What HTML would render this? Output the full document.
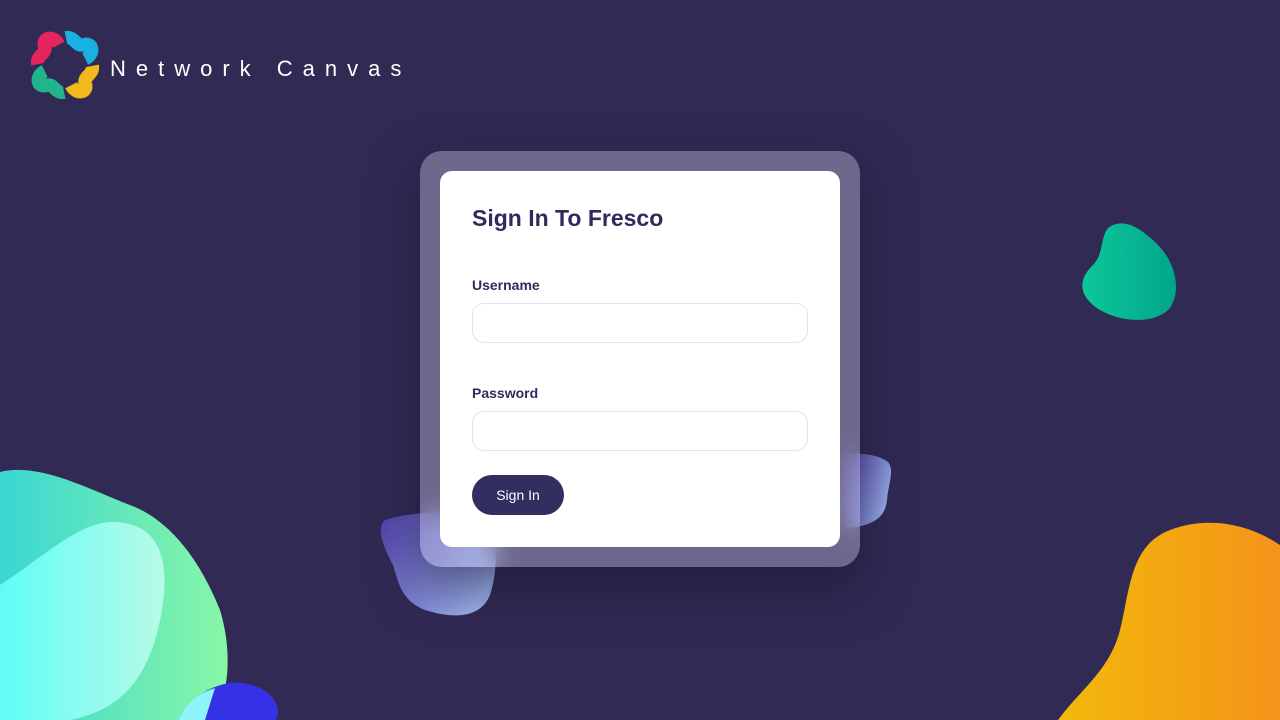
<!DOCTYPE html>
<html><head><meta charset="utf-8"><style>
*{margin:0;padding:0;box-sizing:border-box}
body{width:1280px;height:720px;overflow:hidden;background:#312a54;font-family:"Liberation Sans",sans-serif;position:relative}
svg.bg{position:absolute;left:0;top:0}
.logo{position:absolute;left:28px;top:28px}
.brand{position:absolute;left:110px;top:56px;color:#fff;font-size:22px;letter-spacing:10px;font-weight:400}
.frame{position:absolute;left:420px;top:151px;width:440px;height:416px;border-radius:22px;background:rgba(200,200,225,0.4);backdrop-filter:blur(12px);box-shadow:0 20px 50px rgba(20,15,40,0.5)}
.card{position:absolute;left:20px;top:20px;width:400px;height:376px;border-radius:12px;background:#fff}
h1{position:absolute;left:32px;top:34px;font-size:23px;font-weight:600;color:#312a5c}
label{position:absolute;left:32px;font-size:14px;font-weight:600;color:#312a5c}
.inp{position:absolute;left:32px;width:336px;height:40px;border:1px solid #d9e6ee;border-radius:12px}
.btn{position:absolute;left:32px;top:304px;width:92px;height:40px;border-radius:20px;background:#312e60;color:#fff;font-size:14px;text-align:center;line-height:40px}
</style></head><body>
<svg class="bg" width="1280" height="720">
<defs>
<linearGradient id="g1" x1="0" x2="1"><stop offset="0" stop-color="#3ad6d2"/><stop offset="1" stop-color="#88f7a6"/></linearGradient>
<linearGradient id="g2" x1="0" x2="1"><stop offset="0" stop-color="#5ffcf8"/><stop offset="1" stop-color="#b8fbe6"/></linearGradient>
<linearGradient id="g3" x1="0" x2="1"><stop offset="0" stop-color="#f2b90a"/><stop offset="1" stop-color="#f4941a"/></linearGradient>
<linearGradient id="g4" x1="0" x2="1"><stop offset="0" stop-color="#0cc79b"/><stop offset="1" stop-color="#00a58a"/></linearGradient>
<linearGradient id="g5" x1="0" x2="1" y1="0" y2="0.6"><stop offset="0" stop-color="#4f3fa8"/><stop offset="1" stop-color="#9ab0ea"/></linearGradient>
</defs>
<path d="M0 472 C40 462 90 490 130 505 C170 520 200 560 220 610 C235 660 225 700 215 720 L0 720Z" fill="url(#g1)"/>
<path d="M0 585 C40 560 80 520 115 522 C160 524 170 560 162 610 C150 680 120 710 70 720 L0 720Z" fill="url(#g2)"/>
<path d="M178 720 C190 695 215 685 230 683 C260 680 285 700 276 720Z" fill="#3531e6"/>
<path d="M178 720 C188 700 200 693 215 688 L205 720Z" fill="#8ff4fa"/>
<path d="M1058 720 C1080 690 1110 670 1120 630 C1130 590 1130 545 1170 530 C1210 515 1250 525 1280 545 L1280 720Z" fill="url(#g3)"/>
<path d="M1108 228 C1125 215 1145 232 1158 245 C1175 262 1182 290 1170 308 C1155 325 1120 322 1100 310 C1078 296 1078 280 1092 266 C1104 255 1100 238 1108 228Z" fill="url(#g4)"/>
<path d="M385 520 C410 512 450 510 480 515 C500 530 498 570 490 595 C480 620 450 618 425 610 C400 600 398 580 393 565 C385 550 375 528 385 520Z" fill="url(#g5)"/>
<path d="M845 455 C860 452 880 455 888 462 C895 470 888 485 887 500 C885 520 870 525 850 528 L845 528Z" fill="url(#g5)"/>
</svg>
<svg class="logo" width="74" height="74" viewBox="-5 -5 84 84" fill="none" stroke-width="15">
<path d="M30 14 C24 2 10 6 14 16 C17 24 4 26 6 36" stroke="#e5245e"/>
<path d="M38 6 C48 4 50 17 58 14 C68 10 72 24 60 30" stroke="#19b1e0"/>
<path d="M68 38 C70 48 57 50 60 58 C64 68 50 72 44 60" stroke="#f2b91c"/>
<path d="M36 68 C26 70 24 57 16 60 C6 64 2 50 14 44" stroke="#22b48f"/>
</svg>
<div class="brand">Network Canvas</div>
<div class="frame"><div class="card">
<h1>Sign In To Fresco</h1>
<label style="top:106px">Username</label>
<div class="inp" style="top:132px"></div>
<label style="top:214px">Password</label>
<div class="inp" style="top:240px"></div>
<div class="btn">Sign In</div>
</div></div>
</body></html>
